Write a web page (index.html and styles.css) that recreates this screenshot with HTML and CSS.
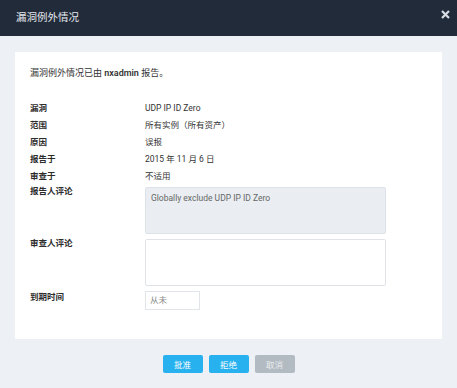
FILE: index.html
```html
<!DOCTYPE html>
<html lang="zh-CN">
<head>
    <meta charset="UTF-8">
    <title>漏洞例外情况</title>
    <link rel="stylesheet" href="styles.css">
</head>
<body>
    <div class="dialog">
        <div class="dialog-header">
            <span class="dialog-title">漏洞例外情况</span>
            <button type="button" class="close-btn">
                <svg width="9" height="9" viewBox="0 0 9 9"><path d="M1 1L8 8M8 1L1 8" stroke="#d9dde3" stroke-width="2.2"/></svg>
            </button>
        </div>

        <div class="dialog-body">
            <div class="card">
                <p class="intro">漏洞例外情况已由 <strong>nxadmin</strong> 报告。</p>

                <div class="details">
                    <div class="label">漏洞</div>
                    <div class="value">UDP IP ID Zero</div>

                    <div class="label">范围</div>
                    <div class="value">所有实例（所有资产）</div>

                    <div class="label">原因</div>
                    <div class="value">误报</div>

                    <div class="label">报告于</div>
                    <div class="value">2015 年 11 月 6 日</div>

                    <div class="label">审查于</div>
                    <div class="value">不适用</div>

                    <div class="label label-box">报告人评论</div>
                    <div class="value-box">
                        <div class="comment readonly">Globally exclude UDP IP ID Zero</div>
                    </div>

                    <div class="label label-box">审查人评论</div>
                    <div class="value-box">
                        <div class="comment"></div>
                    </div>

                    <div class="label label-box label-expire">到期时间</div>
                    <div class="value-box">
                        <div class="expire-input">从未</div>
                    </div>
                </div>
            </div>
        </div>

        <div class="dialog-footer">
            <button type="button" class="btn btn-primary">批准</button>
            <button type="button" class="btn btn-primary">拒绝</button>
            <button type="button" class="btn btn-muted">取消</button>
        </div>
    </div>
</body>
</html>
```

FILE: styles.css
```css
* {
    margin: 0;
    padding: 0;
    box-sizing: border-box;
}

body {
    font-family: Roboto, "Noto Sans CJK SC", sans-serif;
    background: #edf0f4;
    width: 457px;
    height: 388px;
    overflow: hidden;
}

.dialog {
    display: flex;
    flex-direction: column;
    height: 388px;
}

.dialog-header {
    height: 36px;
    background: #222b3a;
    display: flex;
    align-items: center;
    justify-content: space-between;
    padding: 0 6px 4px 16px;
}

.dialog-title {
    color: #e6e9ee;
    font-size: 10.5px;
}

.close-btn {
    background: none;
    border: none;
    width: 12px;
    height: 12px;
    display: flex;
    align-items: center;
    justify-content: center;
    margin-top: -4px;
}

.dialog-body {
    padding: 16px 15px 0;
}

.card {
    background: #fff;
    height: 287px;
    padding: 16px 15px 0;
}

.intro {
    font-size: 9px;
    color: #333;
    line-height: 11px;
    margin-bottom: 21px;
}

.intro strong {
    font-weight: 600;
}

.details {
    display: grid;
    grid-template-columns: 115px 241px;
    font-size: 8.5px;
    color: #333;
}

.label,
.value {
    height: 17px;
    line-height: 17px;
}

.label {
    font-weight: 600;
    color: #2b2b2b;
}

.label-box {
    height: auto;
    line-height: 12px;
    padding-top: 0;
}

.label-expire {
    padding-top: 2px;
}

.value-box {
    padding: 2px 0 3px;
}

.comment {
    height: 47px;
    border: 1px solid #dfe3e8;
    border-radius: 2px;
    background: #fff;
    padding: 5px 5px;
    font-size: 8.5px;
    color: #666;
}

.comment.readonly {
    background: #eaeef2;
    border-color: #dde2e8;
}

.expire-input {
    width: 55px;
    height: 19px;
    border: 1px solid #e1e4e8;
    padding: 0 4px;
    line-height: 17px;
    font-size: 8.5px;
    color: #888;
}

.dialog-footer {
    display: flex;
    justify-content: center;
    gap: 6px;
    padding-top: 16px;
}

.btn {
    width: 40px;
    height: 18px;
    border: none;
    border-radius: 2px;
    color: #fff;
    font-family: Roboto, "Noto Sans CJK SC", sans-serif;
    font-size: 8.5px;
}

.btn-primary {
    background: #27b2ef;
}

.btn-muted {
    background: #b3bbc2;
    color: #e8ecef;
}
```
